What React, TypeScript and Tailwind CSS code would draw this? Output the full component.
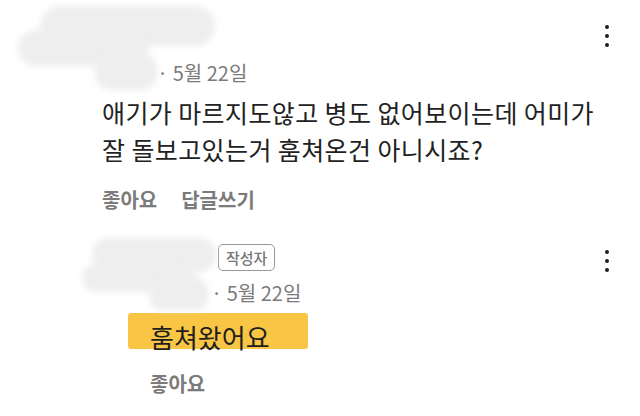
import React from 'react';

const Dots = () => (
  <div className="flex flex-col items-center gap-[5px]">
    <div className="w-[4px] h-[4px] rounded-full bg-[#1e1e1e]" />
    <div className="w-[4px] h-[4px] rounded-full bg-[#1e1e1e]" />
    <div className="w-[4px] h-[4px] rounded-full bg-[#1e1e1e]" />
  </div>
);

// the nicknames are smudged out in the screenshot
const Smudge = ({ className }: { className: string }) => (
  <div className={`absolute bg-[#eeeeee] blur-[3px] ${className}`} />
);

export default function App() {
  return (
    <div className="relative w-[640px] h-[416px] bg-white overflow-hidden font-['Noto_Sans_CJK_KR','Noto_Sans',sans-serif]">
      {/* first comment */}
      <div className="relative flex pl-[102px] pr-[20px] pt-[22px]">
        <div className="flex-1 flex flex-col">
          <div className="h-[40px]" />
          <div className="flex items-center text-[20px] leading-[22px] text-[#7a7a7a]">
            <span className="w-[55px]" />
            <span>· 5월 22일</span>
          </div>
          <p className="mt-[10px] text-[25px] leading-[37px] tracking-[0.4px] text-[#222]">
            애기가 마르지도않고 병도 없어보이는데 어미가
            <br />
            잘 돌보고있는거 훔쳐온건 아니시죠?
          </p>
          <div className="mt-[20px] flex gap-[24px] text-[20px] leading-[24px] font-bold text-[#7b7b7b]">
            <span>좋아요</span>
            <span>답글쓰기</span>
          </div>
        </div>
        <div className="absolute right-[31px] top-[25px]">
          <Dots />
        </div>
      </div>

      {/* reply */}
      <div className="relative flex pl-[150px] pr-[20px] pt-[31px]">
        <div className="flex-1 flex flex-col">
          <div className="flex items-center h-[28px]">
            <span className="w-[68px]" />
            <span className="border-[1.5px] border-[#9a9a9a] rounded-[5px] px-[7px] text-[15px] leading-[25px] text-[#777] font-medium">
              작성자
            </span>
          </div>
          <div className="mt-[11px] flex items-center text-[20px] leading-[22px] text-[#7a7a7a]">
            <span className="w-[61px]" />
            <span>· 5월 22일</span>
          </div>
          <div className="mt-[12px] relative h-[36px]">
            <div className="absolute left-[-22px] top-[-3px] w-[180px] h-[36px] bg-[#f8c544] rounded-[3px]" />
            <span className="relative block pt-[4px] text-[26px] leading-[34px] text-[#1e1e1e]">훔쳐왔어요</span>
          </div>
          <div className="mt-[20px] text-[20px] leading-[24px] font-bold text-[#7b7b7b]">좋아요</div>
        </div>
        <div className="absolute right-[31px] top-[38px]">
          <Dots />
        </div>
      </div>

      {/* smudges over the nicknames */}
      <Smudge className="left-[40px] top-[6px] w-[175px] h-[40px] rounded-[20px]" />
      <Smudge className="left-[18px] top-[30px] w-[130px] h-[36px] rounded-[18px]" />
      <Smudge className="left-[95px] top-[52px] w-[62px] h-[38px] rounded-[16px]" />
      <Smudge className="left-[92px] top-[238px] w-[124px] h-[34px] rounded-[16px]" />
      <Smudge className="left-[82px] top-[264px] w-[115px] h-[28px] rounded-[14px]" />
      <Smudge className="left-[150px] top-[278px] w-[58px] h-[32px] rounded-[12px]" />
    </div>
  );
}
